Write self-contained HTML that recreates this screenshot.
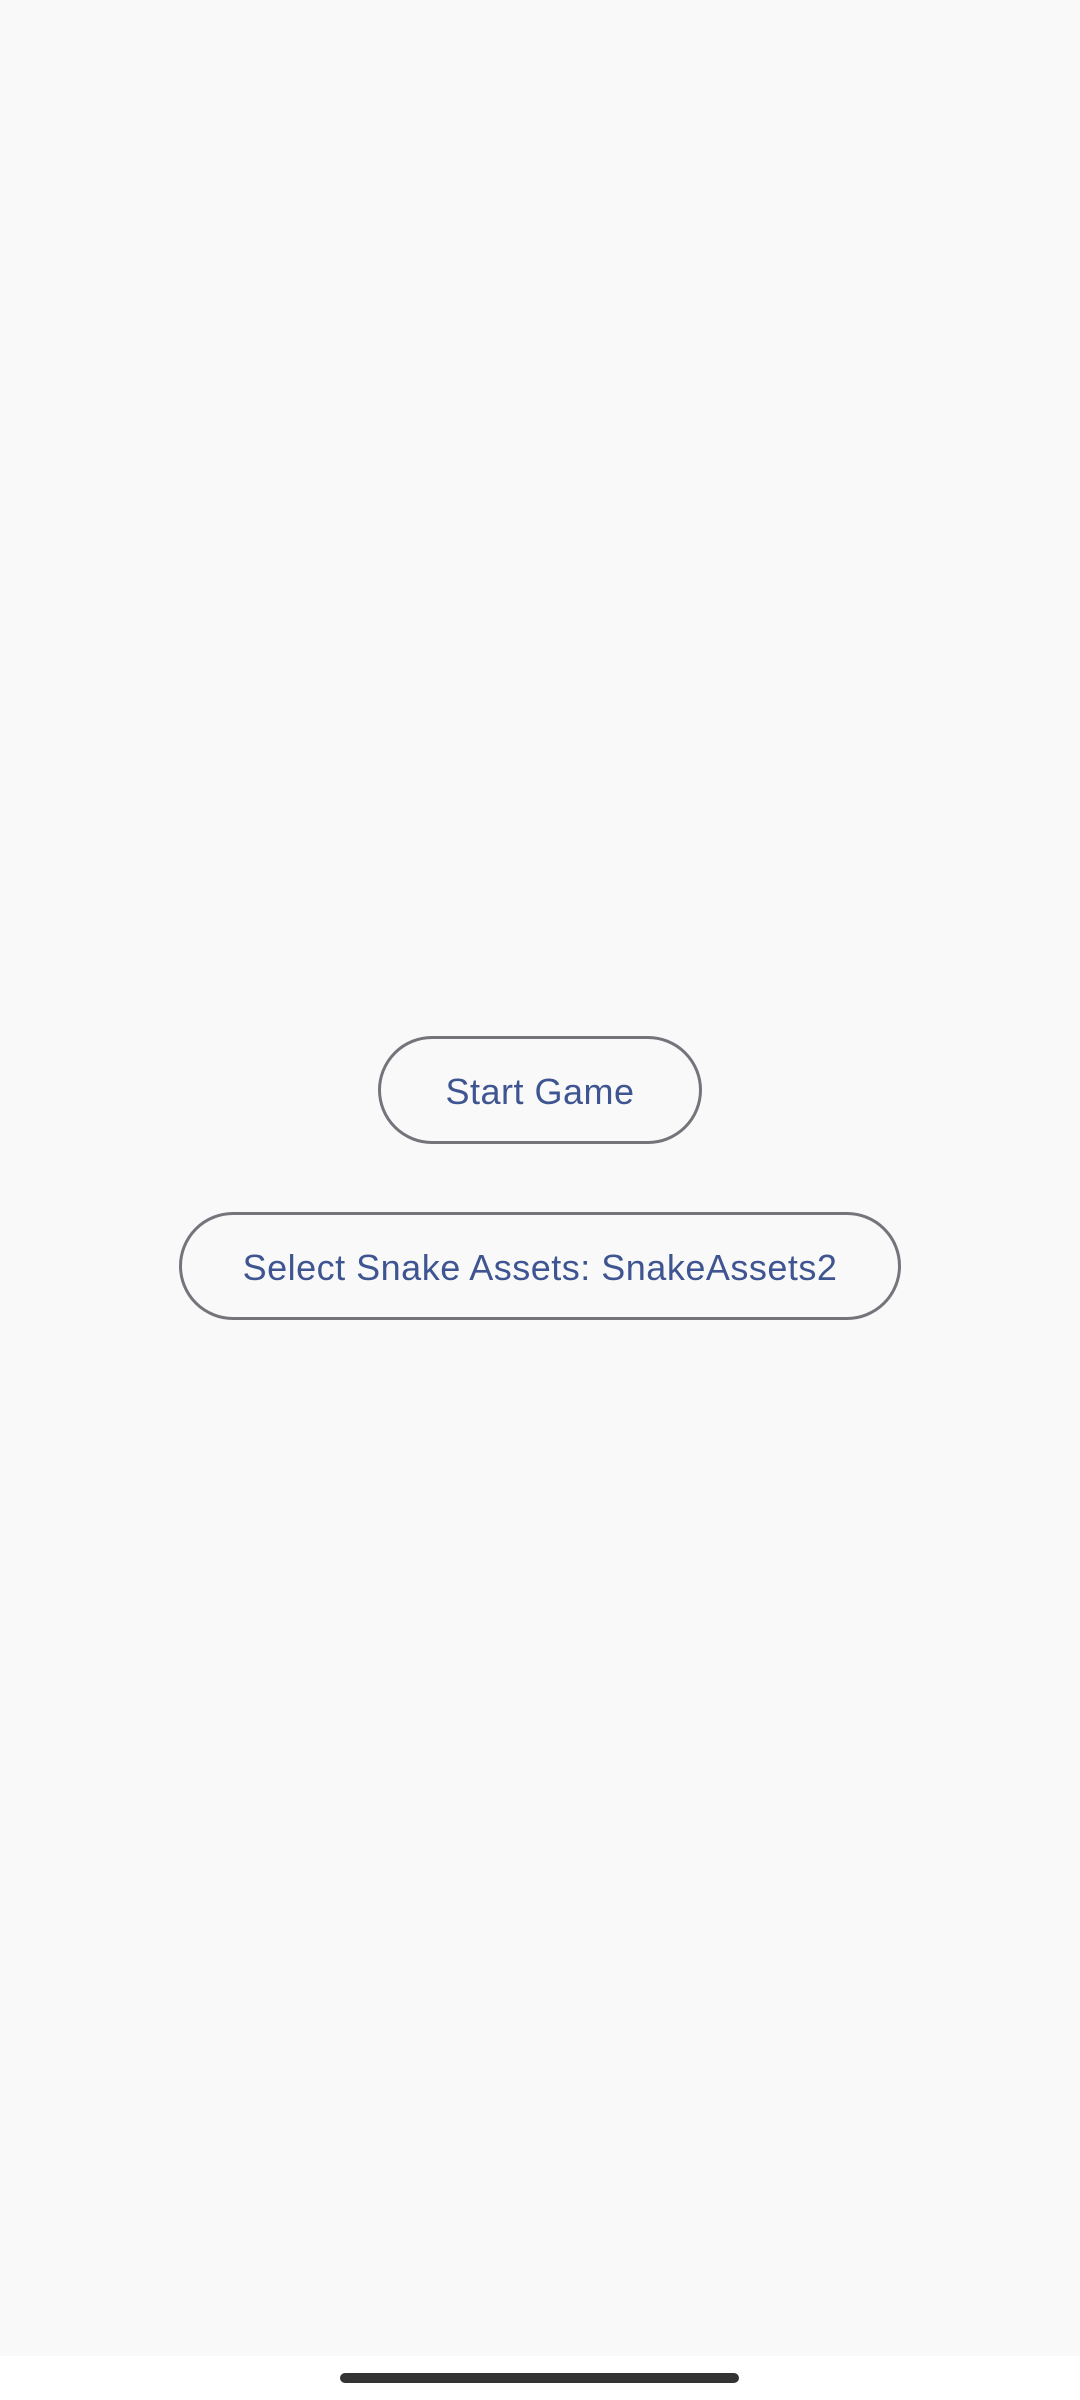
<!DOCTYPE html>
<html><head><meta charset="utf-8"><style>
html,body{margin:0;padding:0}
body{width:1080px;height:2400px;background:#f9f9f9;position:relative;overflow:hidden;font-family:"Liberation Sans",sans-serif}
.btn{position:absolute;box-sizing:border-box;border:3px solid #76747b;border-radius:60px;color:#3f5591;font-size:36px;display:flex;align-items:center;justify-content:center;letter-spacing:0.5px;padding-top:3px}
.nav{position:absolute;left:0;top:2356px;width:1080px;height:44px;background:#fff}
.bar{position:absolute;left:340px;top:2373px;width:399px;height:10px;border-radius:5px;background:#333}
</style></head><body>
<div class="btn" style="left:378px;top:1036px;width:324px;height:108px;">Start Game</div>
<div class="btn" style="left:179px;top:1212px;width:722px;height:108px;">Select Snake Assets: SnakeAssets2</div>
<div class="nav"></div>
<div class="bar"></div>
</body></html>
